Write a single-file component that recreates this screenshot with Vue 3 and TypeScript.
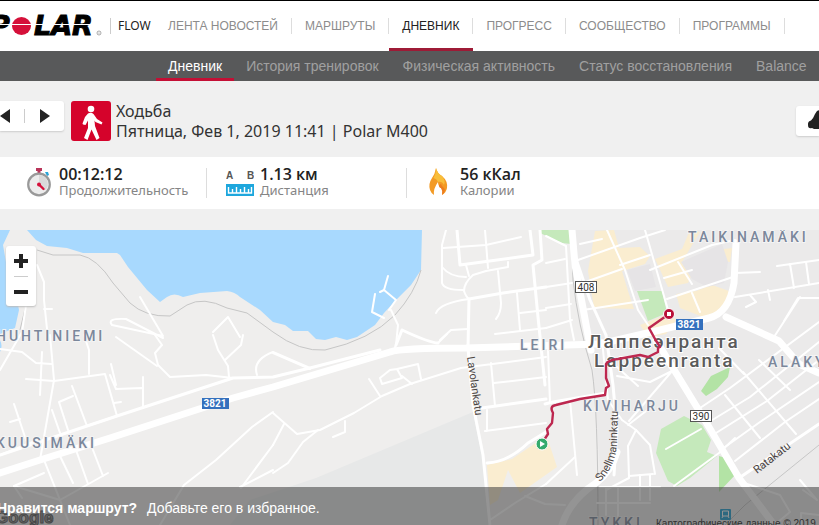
<script setup lang="ts">
import { ref } from 'vue'

interface Stat {
  id: string
  value: string
  label: string
}

const mainNav = ['ЛЕНТА НОВОСТЕЙ', 'МАРШРУТЫ', 'ДНЕВНИК', 'ПРОГРЕСС', 'СООБЩЕСТВО', 'ПРОГРАММЫ']
const subNav = ['Дневник', 'История тренировок', 'Физическая активность', 'Статус восстановления', 'Balance']
const activeMain = ref('ДНЕВНИК')
const activeSub = ref('Дневник')

const stats: Stat[] = [
  { id: 'time', value: '00:12:12', label: 'Продолжительность' },
  { id: 'distance', value: '1.13 км', label: 'Дистанция' },
  { id: 'calories', value: '56 кКал', label: 'Калории' },
]

const parks: string[] = [
  'M540 230H571V244L562 243L540 233Z',
  'M637 291H662L667 313L648 321Z',
  'M661 429L684 416L702 425L711 440L707 452L717 456L690 478L677 486L668 481L656 453Z',
]

const districts: string[] = [
  'M595 231L614 230L619 248L640 247L650 256L645 264L622 271L628 291L634 309L594 308L588 271Z',
  'M655 259L682 249L690 230L700 232L682 262L694 269L688 283L668 287Z',
  'M717 250L732 248L730 262L722 261Z',
  'M676 294L696 291L712 285L729 291L726 308L703 317L680 308Z',
  'M640 325L668 314L676 320L666 334L648 337Z',
  'M487 465L512 459L540 440L548 440L557 467L520 493L508 470L498 500L490 505Z',
]

const blocks: string[] = [
  'M681 262L722 244L728 262L724 283L707 287L692 279Z',
  'M627 270L650 264L656 287L635 291Z',
]

const thinRoads: string[] = [
  'M446 230L442 245V267Q450 277 466 277',
  'M485 230L488 268',
  'M443 248L486 245L521 237',
  'M442 267V283Q444 290 463 290',
  'M466 265L469 276',
  'M508 262V267L486 271L473 275Q464 283 464 291Q466 297 469 299',
  'M436 313Q440 303 469 299',
  'M498 271L501 303Q501 313 496 319',
  'M517 293L520 330',
  'M520 313L546 310M495 334L546 328',
  'M440 340L451 330L468 329',
  'M388 276L384 290L396 300L389 310M375 294L372 312L384 318',
  'M391 310L398 325L396 345L393 352M384 290L380 292',
  'M438 343L447 334',
  'M37 265L44 282V300L47 329M44 309L52 309M26 305L22 332L0 370',
  'M140 297L163 336L112 325Q106 318 126 319L163 338',
  'M213 332L228 317L240 337',
  'M155 335L162 345L155 353L158 365L170 377L206 375L233 378',
  'M116 337L157 366M213 335L218 350L228 366L229 377M243 335L241 345L225 360',
  'M257 375Q252 360 273 352L310 368',
  'M50 335L54 380L40 460M54 381L105 374L117 416M26 379L54 381',
  'M84 335L89 350L89 374M0 349L22 352L36 363L52 364M42 352L40 395',
  'M72 386L87 426L117 416M73 396L59 402L68 430M52 410L60 433M14 404L26 440M10 422L20 419',
  'M143 377V408M110 375L116 389L142 388M111 364L116 385M114 403L121 402',
  'M60 456L73 483M76 450L88 484M93 450L103 476M108 473L60 500L14 486L44 473',
  'M44 460L70 525M0 455L40 439M14 486L22 498',
  'M273 412L252 427L216 460L184 485L160 525M273 445L241 488M240 487L273 470',
  'M273 413L297 434L320 430L354 413L382 396L410 384L461 368',
  'M273 473L288 463L303 442L318 430M273 445L284 424',
  'M369 379L380 396M380 378L390 370L397 369L402 378L382 384L380 378M397 369L418 364L421 379M402 376L412 384',
  'M345 421V432L333 437',
  'M273 353L310 369',
  'M461 368L546 357M491 363L495 406M494 383L546 377M485 431L546 423M487 410V431',
  'M546 484L515 503L490 520M525 496L545 504L565 505',
  'M546 263L565 259M546 287L572 283M546 308L571 304M546 328L572 320',
  'M546 236L566 246L570 320L574 340',
  'M578 260L640 238L665 230M580 244L602 239M577 285L622 269',
  'M650 270L712 245L735 240M607 230L625 270L638 310L648 325M620 265L650 255',
  'M645 230L668 310M664 278L692 270M678 262L692 284M667 299L733 277M692 293L700 312',
  'M735 273L760 272M735 297L819 283M777 266L819 260M790 264L794 288M806 262L809 284M750 295L756 302L746 307M768 290L770 300',
  'M819 298L798 298L784 321M800 297L772 340',
  'M583 310L622 304L648 300M548 350L550 403M570 400L577 475',
  'M602 340L608 400L622 420L636 430L650 445L655 474M628 425L650 408',
  'M617 376L650 382L672 371M629 421L673 370M617 367L638 386',
  'M666 449L701 429M674 486L719 453L735 438',
  'M636 430L628 446L629 478L606 490M629 476L653 474M650 475V500',
  'M600 487H660M606 487V515M597 503H650M618 488V518M640 475V500',
  'M546 484L575 457',
  'M700 408L730 388L819 322M709 422L750 397L819 342M716 433L767 401L819 360M725 447L760 422L819 382M735 461L785 422L819 399',
  'M725 395L760 438M743 372L796 434M719 348L744 374M759 360L790 390',
  'M744 483L780 495L790 512L778 522M800 480L817 500L803 490M801 525V513L819 515',
]

const midRoads: string[] = [
  'M457 230L460 265L533 255L530 230',
  'M469 299L468 348L473 405L483 455L490 525',
  'M469 299L503 293L546 287',
  'M540 230L542 260L533 265L538 317L545 385',
  'M482 408L546 399',
  'M0 455L87 426L117 416L233 378L273 377L310 368L380 350',
  'M396 345L402 330Q430 343 438 343',
  'M573 250L590 300L606 335L613 385L617 430L614 475',
  'M545 404L553 402L606 393',
  'M739 478L819 424',
  'M546 432L528 443Q508 462 487 463',
]

const majorRoads: string[] = [
  'M0 473L40 460L110 438L233 398L273 387L390 352Q400 348 466 348L600 344L656 331L709 318Q729 313 734 283L736 243',
  'M572 230L575 265L588 335L591 350',
  'M656 340L673 368L706 422L739 478L778 530',
  'M726 317L779 341L799 364L819 373',
  'M562 525Q570 500 596 483Q612 470 617 452',
]
</script>

<template>
  <div class="page">
    <header class="topbar">
      <a class="brand" href="#" aria-label="Polar Flow">
        <svg class="logo" viewBox="0 0 104 24" aria-hidden="true">
          <text x="-10" y="21">P</text>
          <ellipse cx="21.500" cy="12" rx="10.500" ry="10" fill="#fff" />
          <ellipse cx="21.500" cy="12" rx="9.500" ry="9" fill="#d5103a" />
          <text x="34" y="21">LAR</text>
          <rect x="0" y="10" width="97" height="1" fill="#fff" />
          <circle cx="99" cy="19" r="2" fill="none" stroke="#888" stroke-width=".7" />
          <circle cx="99" cy="19" r=".6" fill="#888" />
        </svg>
        <span class="flow">FLOW</span>
      </a>
      <nav class="main-nav" aria-label="Главное меню">
        <a
          v-for="item in mainNav"
          :key="item"
          href="#"
          :class="{ active: item === activeMain }"
          @click.prevent="activeMain = item"
        ><span>{{ item }}</span></a>
      </nav>
    </header>

    <nav class="sub-nav" aria-label="Разделы дневника">
      <a
        v-for="item in subNav"
        :key="item"
        href="#"
        :class="{ active: item === activeSub }"
        @click.prevent="activeSub = item"
      >{{ item }}</a>
    </nav>

    <section class="session">
      <div class="pager">
        <button type="button" aria-label="Предыдущая тренировка">
          <svg viewBox="0 0 10 14" width="10" height="14"><path d="M10 0V14L0 7Z" fill="#222" /></svg>
        </button>
        <button type="button" aria-label="Следующая тренировка">
          <svg viewBox="0 0 10 14" width="10" height="14"><path d="M0 0V14L10 7Z" fill="#222" /></svg>
        </button>
      </div>
      <svg class="sport" viewBox="0 0 40 40" aria-hidden="true">
        <rect width="40" height="40" rx="3" fill="#d5032b" />
        <circle cx="20" cy="8" r="3.300" fill="#fff" />
        <path d="M17 12.500Q20 11 22.500 13L26 18L31.500 21.500L30.500 23.500L24.500 21L23.500 19.500L24 25L28.500 37L25.500 39L20.500 28.500L16.500 39L13 37L17 27L17 19.500L14.500 24L12 23.500L11.500 22.500L14 16Z" fill="#fff" />
      </svg>
      <h1>Ходьба<br />Пятница, Фев 1, 2019 11:41 | Polar M400</h1>
      <button class="like" type="button" aria-label="Нравится">
        <svg viewBox="0 0 24 24" width="24" height="24">
          <path d="M1 15Q1 12 4 11.500Q6 10 8 5L10 2Q13 0 14 3L13 9H22V20H7L5 19Q1 20 1 16Z" fill="#222" />
        </svg>
      </button>
    </section>

    <section class="stats">
      <div v-for="stat in stats" :key="stat.id" class="stat">
        <svg v-if="stat.id === 'time'" class="stat-icon" viewBox="-1 0 28 30" aria-hidden="true">
          <path d="M10 0H16V3H14.500V6H11.500V3H10Z" fill="#b9355a" />
          <path d="M19 4L22 4L23 7L21 8Z" fill="#2aa5d8" />
          <circle cx="13" cy="16.500" r="10.800" fill="#ececec" stroke="#999" stroke-width="2.200" />
          <path d="M13 7V16.500L19 22.500A9 9 0 0 0 13 7Z" fill="#dadada" />
          <path d="M13 16.500L17.500 21" stroke="#d5103a" stroke-width="2.400" stroke-linecap="round" />
          <circle cx="13" cy="16.500" r="2" fill="#d5103a" />
        </svg>
        <svg v-else-if="stat.id === 'distance'" class="stat-icon" viewBox="0 0 28 30" aria-hidden="true">
          <text x="0" y="11" class="ab">A</text>
          <text x="21" y="11" class="ab">B</text>
          <rect x="0" y="16" width="28" height="12" fill="#1ea7dd" />
          <path d="M2.500 19V25H25.500V19M6.500 21V25M10.500 19V25M14.500 21V25M18.500 19V25M22.500 21V25" fill="none" stroke="#fff" stroke-width="1.400" />
        </svg>
        <svg v-else class="stat-icon" viewBox="1 0 28 30" aria-hidden="true">
          <path d="M11 0Q10 6 7 10Q3 16 5 22Q6 25 9 27Q8 21 13 14Q13 18 16 20Q19 23 17 27Q21 25 22 20Q23 13 17 8Q12 5 11 0Z" fill="#f39a24" />
          <path d="M11 0Q11 6 8.500 10Q12 11 13 14Q17 13 19 17Q21 13 17 8Q12 5 11 0Z" fill="#f8be3a" />
          <path d="M14 17Q14 20 16 20Q18 23 17 27L19 25Q21 21 18 19Q17 19 16 16Z" fill="#ed7d1d" />
        </svg>
        <dl>
          <dt>{{ stat.label }}</dt>
          <dd>{{ stat.value }}</dd>
        </dl>
      </div>
    </section>

    <section class="map">
      <svg class="canvas" viewBox="0 230 819 295" role="img" aria-label="Карта маршрута">
        <rect y="230" width="819" height="295" fill="#efeeed" />
        <path d="M573 230H819V525H562L600 470L592 350Z" fill="#ebeaea" />
        <path d="M473 412L316 478L250 500L230 525H492L482 455Z" fill="#e7e8e8" />
        <path d="M0 230H10L3 245L6 262L14 285L19 310L15 328L0 334Z" fill="#a8d9fe" />
        <path d="M27 230L36 240L47 246L67 248L83 253H117L120 255L128 267L147 290L160 302L167 297Q174 292 183 297L200 293L227 291Q235 292 240 297L260 310L273 322L285 325L293 331H308L316 339L325 340L336 337L347 340L357 337L375 325L384 313L397 299L411 285L421 270L422 230Z" fill="#a8d9fe" />
        <path d="M0 340Q3 346 0 352Z" fill="#a8d9fe" />
        <path v-for="d in districts" :key="d" :d="d" fill="#faedd0" />
        <path v-for="d in blocks" :key="d" :d="d" fill="#e6e4e6" />
        <path v-for="d in parks" :key="d" :d="d" fill="#c5e9bb" />
        <path d="M701 391L711 376L730 367L728 377L717 389L706 396Z M719 456L729 459L736 474L719 492Z" fill="#b3e3a5" />

        <g fill="none" stroke="#c6c6c6" stroke-width="1">
          <path d="M37 250L53 255H80Q97 258 113 283L130 303Q145 317 170 316L187 305Q203 296 227 308L247 313L273 332Q300 352 325 350Q370 340 395 315Q415 293 421 270" />
          <path d="M571 230L573 280Q578 325 592 370Q598 410 598 525" />
          <path d="M819 445L745 505L725 525M26 305L20 330" />
        </g>
        <g fill="none" stroke="#fff" stroke-linejoin="round" stroke-linecap="round">
          <path v-for="d in thinRoads" :key="d" :d="d" stroke-width="2" />
          <path v-for="d in midRoads" :key="d" :d="d" stroke-width="3" />
          <path v-for="d in majorRoads" :key="d" :d="d" stroke-width="7" />
        </g>

        <g class="area">
          <text x="-4" y="341">HUHTINIEMI</text>
          <text x="-4" y="448">KUUSIMÄKI</text>
          <text x="688" y="242">TAIKINAMÄKI</text>
          <text x="520" y="350">LEIRI</text>
          <text x="768" y="367">ALAKYLÄ</text>
          <text x="583" y="411">KIVIHARJU</text>
          <text x="589" y="528">TYKKI</text>
        </g>
        <g class="city">
          <text x="588" y="348">Лаппеэнранта</text>
          <text x="594" y="367">Lappeenranta</text>
        </g>
        <g class="street">
          <text transform="translate(467 357) rotate(82)">Lavolankatu</text>
          <path id="snellman" d="M600 482Q616 466 617 442L618 410" fill="none" />
          <text><textPath href="#snellman">Snellmaninkatu</textPath></text>
          <text transform="translate(757 474) rotate(-38)">Ratakatu</text>
        </g>
        <g class="badge-blue">
          <rect x="202" y="398" width="27" height="11" />
          <text x="215" y="407">3821</text>
          <rect x="676" y="319" width="27" height="11" />
          <text x="689" y="328">3821</text>
        </g>
        <g class="badge-white">
          <rect x="575.500" y="281.500" width="21" height="11" />
          <text x="586" y="291">408</text>
          <rect x="690.500" y="410.500" width="21" height="11" />
          <text x="701" y="420">390</text>
        </g>

        <path d="M542 443L548 434L547 429L552 423L553 413Q549 406 556 405L580 399L605 395L606 388L609 386L606 378L606 364Q608 360 618 359L640 355L648 357L658 352V348L660 347L655 339L649 328L669 314" fill="none" stroke="#bd274f" stroke-width="2.400" stroke-linejoin="round" />
        <circle cx="669" cy="314" r="5.500" fill="#b90f38" stroke="#fff" stroke-width="1" />
        <rect x="667" y="312" width="4" height="4" fill="#fff" />
        <circle cx="542" cy="444" r="6" fill="#35ab6c" stroke="#fff" stroke-width="1" />
        <path d="M540 441V447L545 444Z" fill="#fff" />

        <g>
          <rect x="720" y="509" width="11" height="11" rx="1" fill="#1c9ed0" />
          <path d="M722.500 511H728.500V516H722.500ZM723 516L722 518M728 516L729 518" fill="none" stroke="#fff" />
        </g>
        <text x="-5" y="523" class="google">Google</text>
        <text x="656" y="527" class="credits">Картографические данные © 2019</text>
      </svg>

      <div class="zoom">
        <button type="button" aria-label="Приблизить">
          <svg viewBox="0 0 14 14" width="14" height="14"><path d="M5 0H9V5H14V9H9V14H5V9H0V5H5Z" fill="#222" /></svg>
        </button>
        <button type="button" aria-label="Отдалить">
          <svg viewBox="0 0 14 14" width="14" height="14"><path d="M0 5H14V9H0Z" fill="#222" /></svg>
        </button>
      </div>

      <p class="favorite"><strong>Нравится маршрут?</strong><span>Добавьте его в избранное.</span></p>
    </section>
  </div>
</template>

<style>
body {
  background: #f0f0f0;
}
</style>

<style scoped>
.page {
  overflow: hidden;
  font-family: "Liberation Sans", Arial, sans-serif;
  color: #333;
  white-space: nowrap;
}

a {
  text-decoration: none;
  color: inherit;
}

button {
  display: flex;
  align-items: center;
  justify-content: center;
  padding: 0;
  border: 0;
  background: none;
  cursor: pointer;
}

.topbar {
  display: flex;
  height: 50px;
  border-top: 1px solid #000;
  background: #fff;
}

.brand {
  display: flex;
  flex: none;
  align-items: center;
  width: 155px;
}

.logo {
  width: 104px;
  height: 24px;
}

.logo text {
  font: italic bold 27px "DejaVu Sans", sans-serif;
  fill: #000;
  stroke: #000;
  stroke-width: 1px;
}

.flow {
  margin-left: 6px;
  padding-left: 7px;
  border-left: 1px solid #ccc;
  font: 12px/16px "Noto Sans", sans-serif;
  color: #222;
}

.main-nav {
  display: flex;
  font-size: 12px;
  color: #8c8c8c;
}

.main-nav a {
  display: flex;
  align-items: center;
  padding-top: 3px;
  border-bottom: 3px solid transparent;
}

.main-nav span {
  padding: 0 13px;
  border-right: 1px solid #ddd;
  line-height: 16px;
}

.main-nav .active {
  border-bottom-color: #9e1b36;
  color: #222;
}

.sub-nav {
  display: flex;
  height: 30px;
  padding-left: 156px;
  background: #58595a;
  font-size: 14px;
  line-height: 30px;
  color: #a0a0a0;
}

.sub-nav a {
  box-sizing: border-box;
  padding: 0 12px;
}

.sub-nav .active {
  border-bottom: 3px solid #c40f35;
  color: #fff;
}

.session {
  display: flex;
  align-items: flex-start;
  padding: 20px 0 16px;
}

.pager {
  display: flex;
  align-items: center;
  width: 64px;
  height: 30px;
  margin-right: 7px;
  border-radius: 0 3px 3px 0;
  background: #fff;
  box-shadow: 0 1px 2px #ccc;
}

.pager button {
  flex: 1;
}

.pager button:first-child {
  flex: none;
  justify-content: flex-start;
  width: 25px;
  border-right: 1px solid #ccc;
}

.sport {
  flex: none;
  width: 40px;
  height: 40px;
}

h1 {
  margin: 0 0 0 5px;
  font: 16px/20px "Noto Sans", sans-serif;
}

.like {
  width: 23px;
  height: 30px;
  margin: 5px 0 0 auto;
  padding-left: 11px;
  overflow: hidden;
  justify-content: flex-start;
  border-radius: 3px 0 0 3px;
  background: #fff;
  box-shadow: 0 1px 2px #ccc;
}

.like svg {
  flex: none;
}

.stats {
  display: flex;
  align-items: center;
  height: 52px;
  padding-left: 6px;
  background: #fff;
}

.stat {
  display: flex;
  align-items: center;
  box-sizing: border-box;
  width: 200px;
  height: 30px;
  padding-left: 19px;
}

.stat + .stat {
  border-left: 1px solid #ddd;
}

.stat-icon {
  width: 28px;
  height: 30px;
}

.ab {
  font: bold 10px "Liberation Sans", sans-serif;
  fill: #555;
}

dl {
  display: flex;
  flex-direction: column-reverse;
  margin: 0 0 2px 6px;
}

dt {
  font: 13px/16px "Noto Sans", sans-serif;
  color: #858585;
}

dd {
  margin: 0;
  font: 600 16px/16px "Open Sans", sans-serif;
  color: #222;
}

.map {
  position: relative;
  margin-top: 21px;
}

.canvas {
  display: block;
  width: 100%;
}

.area {
  font: 500 14px Roboto, sans-serif;
  letter-spacing: 3px;
  fill: #7b879b;
  stroke: #f4f4f4;
  stroke-width: 2px;
  paint-order: stroke;
}

.city {
  font: 500 19px Roboto, sans-serif;
  letter-spacing: 2px;
  fill: #5b5b5b;
  stroke: #fff;
  stroke-width: 2px;
  paint-order: stroke;
}

.street {
  font: 11px Roboto, sans-serif;
  fill: #4c4644;
}

.badge-blue {
  font: bold 10px Roboto, sans-serif;
  text-anchor: middle;
  fill: #fff;
}

.badge-blue rect {
  fill: #3470bd;
}

.badge-white {
  font: 10px Roboto, sans-serif;
  text-anchor: middle;
  fill: #333;
}

.badge-white rect {
  fill: #fff;
  stroke: #555;
}

.google {
  font: bold 17px "Liberation Sans", sans-serif;
  fill: #999;
  stroke: #555;
  stroke-width: 1px;
}

.credits {
  font: 10px "Liberation Sans", sans-serif;
  fill: #222;
}

.zoom {
  position: absolute;
  top: 16px;
  left: 6px;
  width: 30px;
  border-radius: 3px;
  background: #fff;
  box-shadow: 0 1px 2px #bbb;
}

.zoom button {
  width: 14px;
  height: 30px;
  margin: 0 auto;
}

.zoom button + button {
  border-top: 1px solid #ccc;
}

.favorite {
  position: absolute;
  inset: auto 0 0;
  height: 38px;
  margin: 0;
  background: rgba(60, 60, 60, 0.55);
  font-size: 14px;
  line-height: 42px;
  color: #fff;
}

.favorite strong {
  margin: 0 10px 0 -3px;
}
</style>
